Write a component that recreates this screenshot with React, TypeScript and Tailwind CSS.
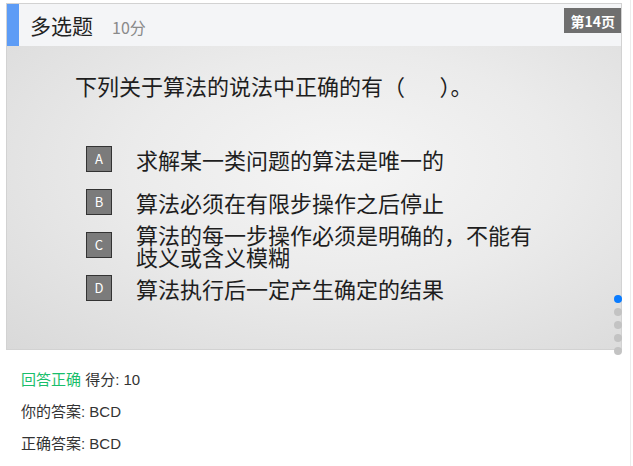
import React from "react";

const options = [
  { key: "A", text: "求解某一类问题的算法是唯一的" },
  { key: "B", text: "算法必须在有限步操作之后停止" },
  { key: "C", text: "算法的每一步操作必须是明确的，不能有歧义或含义模糊" },
  { key: "D", text: "算法执行后一定产生确定的结果" },
];

export default function App() {
  return (
    <div
      className="relative w-[633px] h-[466px] bg-white overflow-hidden"
      style={{ fontFamily: '"Noto Sans CJK SC", "Noto Sans", sans-serif' }}
    >
      <div className="absolute right-[2px] top-0 h-full w-px bg-[#ececec]" />
      <div className="pt-[3px] pl-[6px]">
        <div className="relative w-[616px] h-[347px] border border-[#d2d2d2] flex flex-col">
          {/* header */}
          <div className="h-[42px] bg-[#f4f5f7] flex items-center shrink-0">
            <div className="w-[12px] h-full bg-[#5d9cf6]" />
            <span className="ml-[11px] text-[21px] text-[#222] leading-none">多选题</span>
            <span className="ml-[19px] mt-[3px] text-[16px] text-[#8a8a8a] leading-none">10分</span>
            <div className="ml-auto self-start mt-[4px] h-[25px] px-[6px] bg-[#6f6f6f] text-white text-[14px] font-bold flex items-center leading-none">
              第14页
            </div>
          </div>
          {/* body */}
          <div className="flex-1 bg-[radial-gradient(ellipse_at_55%_40%,#f5f5f5_0%,#ebebeb_45%,#d9d9d9_100%)] pl-[68px] pt-[26px]">
            <div className="text-[22px] leading-[26px] text-[#1e1e1e] whitespace-pre">下列关于算法的说法中正确的有（       ）。</div>
            <div className="mt-[48px] ml-[11px] flex flex-col gap-[17px]">
              {options.map((o) => (
                <div key={o.key} className="flex items-center h-[26px]">
                  <div className="w-[26px] h-[26px] border border-[#333] bg-[#7b7b7b] text-white text-[13px] flex items-center justify-center shrink-0">
                    {o.key}
                  </div>
                  <div className="ml-[24px] w-[400px] text-[22px] leading-[22px] text-[#1e1e1e]">
                    {o.text}
                  </div>
                </div>
              ))}
            </div>
          </div>
          {/* dots */}
          <div className="absolute right-[-1px] top-[291px] flex flex-col gap-[5px]">
            <div className="w-[8px] h-[8px] rounded-full bg-[#0a7cff]" />
            <div className="w-[8px] h-[8px] rounded-full bg-[#c3c3c3]" />
            <div className="w-[8px] h-[8px] rounded-full bg-[#c3c3c3]" />
            <div className="w-[8px] h-[8px] rounded-full bg-[#c3c3c3]" />
            <div className="w-[8px] h-[8px] rounded-full bg-[#c3c3c3]" />
          </div>
        </div>
      </div>
      <div
        className="pl-[21px] pt-[14px] text-[15px] text-[#333] leading-[32px]"
        style={{ fontFamily: '"Liberation Sans", "Noto Sans CJK SC", sans-serif' }}
      >
        <div>
          <span className="text-[#19be6b]">回答正确</span> 得分: 10
        </div>
        <div>你的答案: BCD</div>
        <div>正确答案: BCD</div>
      </div>
    </div>
  );
}
